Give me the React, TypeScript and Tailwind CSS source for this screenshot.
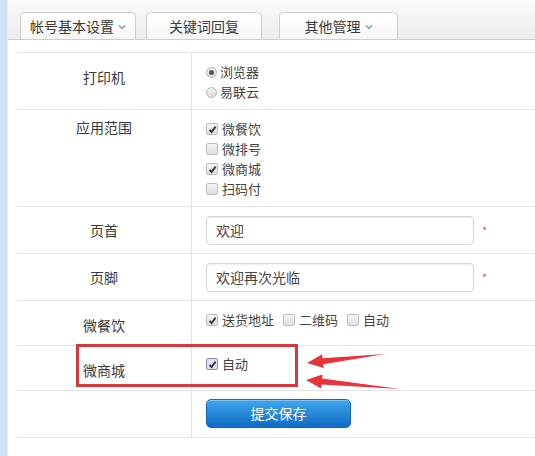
import React from 'react';

const font = { fontFamily: '"Noto Sans CJK SC", "Noto Sans", sans-serif' };

const Chevron = () => (
  <svg width="8" height="6" viewBox="0 0 8 6" className="ml-1 mt-[2px]">
    <polyline points="1,1.5 4,4.5 7,1.5" fill="none" stroke="#6b8fb8" strokeWidth="1.1" />
  </svg>
);

const Tab = ({ label, chevron, className }: { label: string; chevron?: boolean; className: string }) => (
  <div className={`h-[27px] flex items-center justify-center border border-b-0 border-[#cfcfcf] rounded-t-[5px] bg-gradient-to-b from-white to-[#f6f6f6] text-[14px] text-[#3a3a3a] ${className}`}>
    {label}
    {chevron && <Chevron />}
  </div>
);

const Radio = ({ checked }: { checked?: boolean }) => (
  <span className="w-[11px] h-[11px] rounded-full border border-[#b5b5b5] bg-gradient-to-b from-[#f2f2f2] to-[#dcdcdc] flex items-center justify-center mr-[3px]">
    {checked && <span className="w-[5px] h-[5px] rounded-full bg-[#555]" />}
  </span>
);

const Check = ({ checked, strong }: { checked?: boolean; strong?: boolean }) => (
  <span
    className={`w-[12px] h-[12px] rounded-[2px] border flex items-center justify-center mr-[4px] ${
      strong ? 'border-[#8a8fb5] bg-[#dfe2f0]' : 'border-[#bdbdbd] bg-gradient-to-b from-[#f4f4f4] to-[#e0e0e0]'
    }`}
  >
    {checked && (
      <svg width="9" height="9" viewBox="0 0 9 9">
        <polyline points="1.5,4.8 3.6,7 7.6,1.6" fill="none" stroke="#333" strokeWidth="1.8" />
      </svg>
    )}
  </span>
);

const Opt = ({ children }: { children: React.ReactNode }) => (
  <div className="flex items-center h-[20px] text-[13px] text-[#444]">{children}</div>
);

export default function App() {
  return (
    <div className="relative w-[535px] h-[456px] flex bg-white overflow-hidden" style={font}>
      <div className="w-[8px] bg-[#cfe1f6] border-r border-[#e3ecf6]" />
      <div className="flex-1 flex flex-col">
        <div className="h-[40px] flex items-end pl-[12px] bg-gradient-to-b from-[#fafafa] to-[#ececec] border-b border-[#cdcdcd]">
          <Tab label="帐号基本设置" chevron className="w-[116px]" />
          <Tab label="关键词回复" className="w-[116px] ml-[10px]" />
          <Tab label="其他管理" chevron className="w-[119px] ml-[17px]" />
        </div>

        <div className="pt-3 pl-[9px]">
          <div className="grid grid-cols-[175px_1fr] border-b border-[#e2e2e2] text-[14px] text-[#3a3a3a]">
            {/* 打印机 */}
            <div className="h-[57px] border-t border-[#e2e2e2] border-r flex justify-center pt-[14px]">打印机</div>
            <div className="h-[57px] border-t border-[#e2e2e2] pl-[14px] pt-[9px]">
              <Opt><Radio checked />浏览器</Opt>
              <Opt><Radio />易联云</Opt>
            </div>

            {/* 应用范围 */}
            <div className="h-[97px] border-t border-[#e2e2e2] border-r flex justify-center pt-[7px]">应用范围</div>
            <div className="h-[97px] border-t border-[#e2e2e2] pl-[14px] pt-[9px]">
              <Opt><Check checked />微餐饮</Opt>
              <Opt><Check />微排号</Opt>
              <Opt><Check checked />微商城</Opt>
              <Opt><Check />扫码付</Opt>
            </div>

            {/* 页首 */}
            <div className="h-[47px] border-t border-[#e2e2e2] border-r flex items-center justify-center">页首</div>
            <div className="h-[47px] border-t border-[#e2e2e2] pl-[14px] flex items-center">
              <div className="w-[268px] h-[29px] border border-[#d4d4d4] rounded-[4px] shadow-[inset_0_1px_2px_rgba(0,0,0,0.06)] px-[9px] flex items-center text-[14px] text-[#444]">欢迎</div>
              <span className="ml-[8px] text-[11px] text-[#d9534f]">*</span>
            </div>

            {/* 页脚 */}
            <div className="h-[47px] border-t border-[#e2e2e2] border-r flex items-center justify-center">页脚</div>
            <div className="h-[47px] border-t border-[#e2e2e2] pl-[14px] flex items-center">
              <div className="w-[268px] h-[29px] border border-[#d4d4d4] rounded-[4px] shadow-[inset_0_1px_2px_rgba(0,0,0,0.06)] px-[9px] flex items-center text-[14px] text-[#444]">欢迎再次光临</div>
              <span className="ml-[8px] text-[11px] text-[#d9534f]">*</span>
            </div>

            {/* 微餐饮 */}
            <div className="h-[45px] border-t border-[#e2e2e2] border-r flex justify-center pt-[14px]">微餐饮</div>
            <div className="h-[45px] border-t border-[#e2e2e2] pl-[14px] pt-[9px] flex gap-[9px]">
              <Opt><Check checked />送货地址</Opt>
              <Opt><Check />二维码</Opt>
              <Opt><Check />自动</Opt>
            </div>

            {/* 微商城 */}
            <div className="h-[45px] border-t border-[#e2e2e2] border-r flex justify-center pt-[14px]">微商城</div>
            <div className="h-[45px] border-t border-[#e2e2e2] pl-[14px] pt-[8px]">
              <Opt><Check checked strong />自动</Opt>
            </div>

            {/* submit */}
            <div className="h-[47px] border-t border-[#e2e2e2] border-r" />
            <div className="h-[47px] border-t border-[#e2e2e2] pl-[14px] pt-[8px]">
              <button className="w-[145px] h-[29px] rounded-[5px] border border-[#1566b5] bg-gradient-to-b from-[#3ea6ee] to-[#0f6bc3] text-white text-[14px] shadow-[inset_0_1px_0_rgba(255,255,255,0.35)]">
                提交保存
              </button>
            </div>
          </div>
        </div>
      </div>

      {/* annotation overlay */}
      <div className="absolute left-[76px] top-[344px] w-[222px] h-[43px] border-[3px] border-[#d8393f] pointer-events-none" />
      <svg className="absolute inset-0 pointer-events-none" width="535" height="456" viewBox="0 0 535 456">
        <polygon points="307,363 322.1,354.3 322.6,358.2 385,354 323.2,364.2 323.7,368.1" fill="#e8343a" />
        <polygon points="306,380 322.6,374.5 322.2,378.5 400,389 321.6,384.5 321.2,388.5" fill="#e8343a" />
      </svg>
    </div>
  );
}
